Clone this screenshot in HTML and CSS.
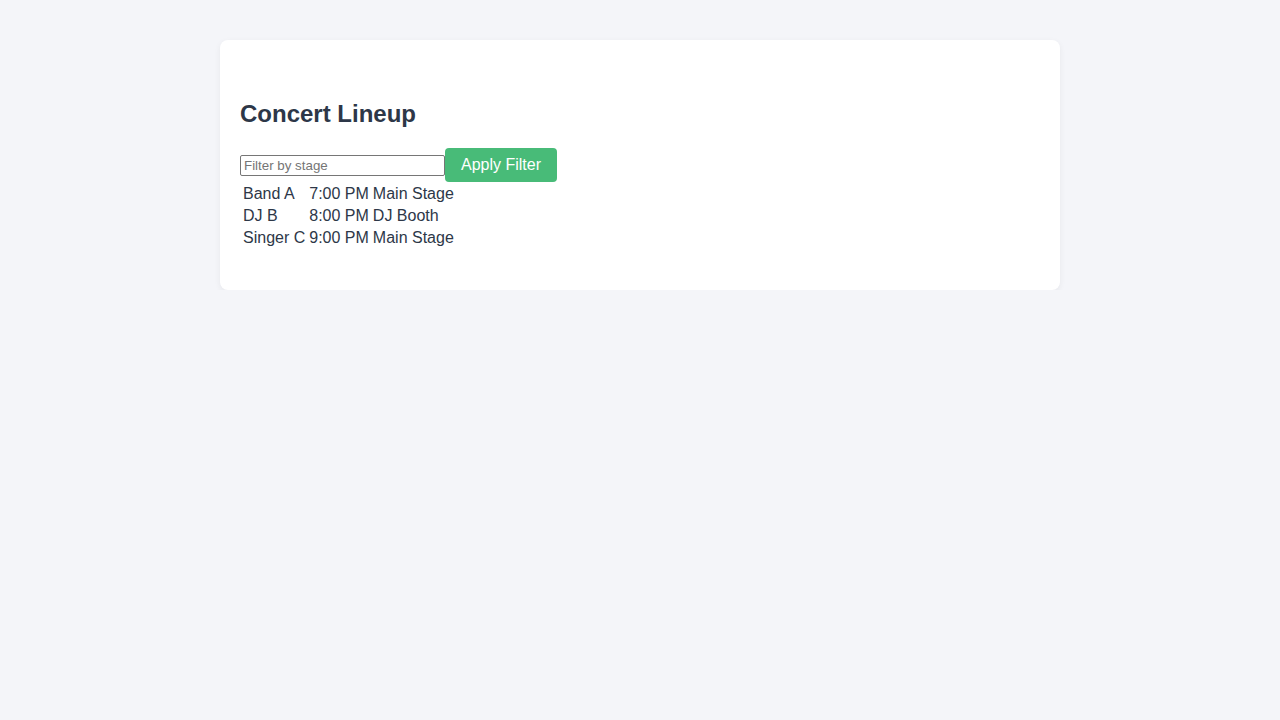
FILE: index.html
```html
<!DOCTYPE html>
<html lang="en">
<head>
<meta charset="utf-8">
<title>Concert Lineup</title>
<link rel="stylesheet" href="styles.css">
</head>
<body>
<main class="card">
  <h2 class="title">Concert Lineup</h2>
  <div class="filter">
    <input class="filter-input" type="text" placeholder="Filter by stage">
    <button class="filter-btn" type="button">Apply Filter</button>
  </div>
  <table class="lineup">
    <tbody>
      <tr><td>Band A</td><td>7:00 PM</td><td>Main Stage</td></tr>
      <tr><td>DJ B</td><td>8:00 PM</td><td>DJ Booth</td></tr>
      <tr><td>Singer C</td><td>9:00 PM</td><td>Main Stage</td></tr>
    </tbody>
  </table>
</main>
</body>
</html>
```
FILE: styles.css
```css
html, body {
  margin: 0;
  padding: 0;
}
body {
  background: #f4f5f9;
  font-family: "Liberation Sans", Arial, sans-serif;
  color: #2d3748;
  padding-top: 40px;
}
.card {
  width: 840px;
  box-sizing: border-box;
  margin: 0 auto;
  background: #ffffff;
  border-radius: 8px;
  box-shadow: 0 2px 6px rgba(0, 0, 0, 0.06);
  padding: 40px 20px 40px;
}
.title {
  margin: 20px 0 20px;
  font-size: 24px;
  font-weight: bold;
  line-height: 28px;
  color: #2d3748;
}
.filter {
  display: flex;
  align-items: center;
}
.filter-input {
  width: 205px;
  height: 21px;
  box-sizing: border-box;
  margin: 0;
  padding: 1px 3px;
  font-family: "Liberation Sans", Arial, sans-serif;
  font-size: 13.33px;
  border: 1px solid #767676;
  border-radius: 2px;
  color: #2d3748;
}
.filter-input::placeholder {
  color: #757575;
}
.filter-btn {
  margin: 0;
  height: 34px;
  padding: 0 16px;
  border: none;
  border-radius: 4px;
  background: #48bb78;
  color: #ffffff;
  font-family: "Liberation Sans", Arial, sans-serif;
  font-size: 16px;
  cursor: pointer;
}
.lineup {
  border-spacing: 2px;
  font-size: 16px;
  color: #2d3748;
}
.lineup td {
  padding: 1px;
  line-height: 18px;
}
```
